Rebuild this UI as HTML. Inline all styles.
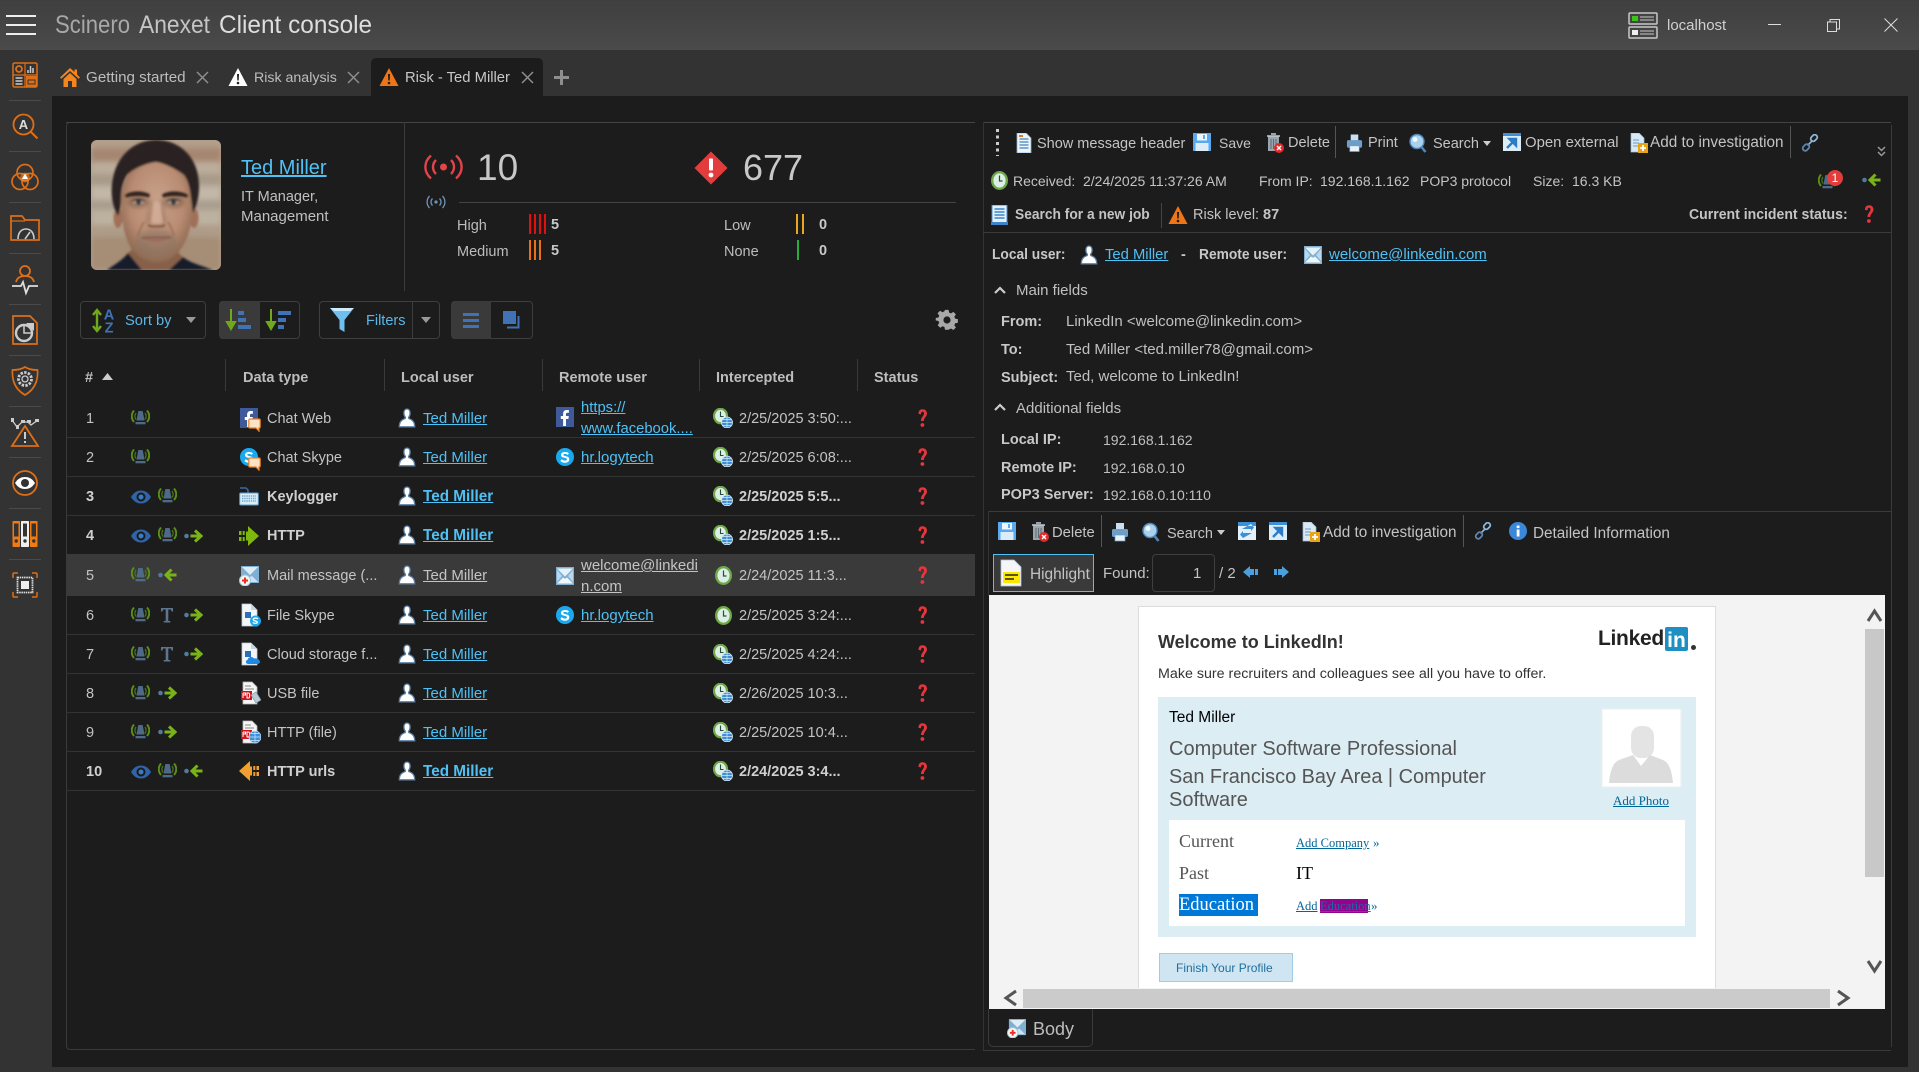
<!DOCTYPE html>
<html><head><meta charset="utf-8"><title>Scinero Anexet Client console</title>
<style>
html,body{margin:0;padding:0;background:#333;}
#app{position:relative;width:1919px;height:1072px;overflow:hidden;background:#333;font-family:"Liberation Sans",sans-serif;color:#c4c4c4;font-size:15px;}
.b{position:absolute;}
.t{position:absolute;white-space:nowrap;line-height:20px;height:20px;}
.i{position:absolute;overflow:visible;}
a{color:#4fc1f5;text-decoration:underline;}
.r{position:absolute;left:0;width:0;height:0;margin-top:1px;}
.r .t{top:-10px;font-size:14.5px;}
.r a.t{font-size:15px;}
.r .i{top:-11px;}
.w{font-weight:bold;color:#d0d0d0;}
.r.w a.t{font-weight:bold;font-size:15.3px;}
.h{top:368px;font-weight:bold;font-size:14.5px;color:#bdbdbd;}
.sep{position:absolute;background:#3a3a3a;}
.s{position:absolute;left:66px;width:909px;height:1px;background:#333;}
.f{font-size:15px;color:#c0c0c0;}
.k{font-weight:bold;font-size:14.5px;color:#c8c8c8;}
.se{font-family:"Liberation Serif",serif;}
</style></head><body>
<svg width="0" height="0" style="position:absolute">
<defs>
<symbol id="alarm" viewBox="0 0 19 19"><path d="M3 2.500C0 6 0 10.500 3 14M16 2.500c3 3.500 3 8 0 11.500" fill="none" stroke="#5a8f18" stroke-width="2"/><path d="M5 5c-1.400 2-1.400 4.500 0 6.500M14 5c1.400 2 1.400 4.500 0 6.500" fill="none" stroke="#4a7416" stroke-width="1.300"/><path d="M7.300 3h4.400l1.800 9.500h-8z" fill="#4f6a86"/><rect x="4.500" y="14" width="10" height="2.300" fill="#4f6a86"/></symbol>
<symbol id="eye" viewBox="0 0 20 14"><path d="M0 7C3 2 6.500 .5 10 .5S17 2 20 7c-3 5-6.500 6.500-10 6.500S3 12 0 7z" fill="#2f64a8"/><circle cx="10" cy="7" r="4.500" fill="#1b1b1b"/><circle cx="10" cy="7" r="2.500" fill="#3c7ac4"/></symbol>
<symbol id="ar" viewBox="0 0 19 14"><circle cx="2.500" cy="7" r="2.300" fill="#527aa0"/><path d="M6.500 7h10M11 1.500 17 7l-6 5.500" fill="none" stroke="#7ab317" stroke-width="3"/></symbol>
<symbol id="al" viewBox="0 0 19 14"><circle cx="2.500" cy="7" r="2.300" fill="#527aa0"/><path d="M18.500 7h-10M13.500 1.500 8 7l5.500 5.500" fill="none" stroke="#7ab317" stroke-width="3"/></symbol>
<symbol id="tt" viewBox="0 0 14 16"><path d="M1 1h12v3.500h-1.500L11 2.500H8.300v11.500h2V15.500H3.700V14h2V2.500H3L2.500 4.500H1z" fill="#5d7690"/></symbol>
<symbol id="user" viewBox="0 0 18 20"><path d="M9 1C7 1 5.900 2.800 5.900 5c0 2 .7 3.400 1.400 4.300.3.400.2 1-.3 1.300C4.800 11.600 1.300 12.600 1.300 18.800h15.400c0-6.200-3.500-7.200-5.700-8.200-.5-.3-.6-.9-.3-1.300.7-.9 1.400-2.300 1.400-4.300C12.100 2.800 11 1 9 1z" fill="#fff" stroke="#5c7fa3" stroke-width="1.300"/></symbol>
<symbol id="fb" viewBox="0 0 18 20"><rect y="0" width="18" height="20" fill="#3f5a9a"/><path d="M10 19v-7h2.400l.4-3H10V7.200c0-.9.300-1.400 1.400-1.400h1.500V3.100c-.3 0-1.200-.1-2.200-.1C8.500 3 7.100 4.300 7.100 6.800V9H4.800v3h2.300v7z" fill="#fff"/></symbol>
<symbol id="bub" viewBox="0 0 13 14"><path d="M2 1h9c.8 0 1.200.5 1.200 1.200v6.500c0 .8-.4 1.200-1.200 1.200v3.300L8 10H2C1.200 10 .8 9.500.8 8.700V2.200C.8 1.500 1.200 1 2 1z" fill="#fbe3c4" stroke="#e8822a" stroke-width="1.200"/></symbol>
<symbol id="sk" viewBox="0 0 18 20"><circle cx="9" cy="10" r="9" fill="#1aa9ee"/><path d="M13 6.500C12 5.300 10.500 5 9 5 6.800 5 5 6 5 8c0 3.500 6 2.200 6 4.300 0 .9-1 1.300-2 1.300-1.400 0-2.400-.6-3.200-1.500L4.400 14c1 1.200 2.700 1.700 4.400 1.700 2.800 0 4.500-1.300 4.500-3.500 0-3.700-6-2.500-6-4.300 0-.7.8-1 1.800-1 1.100 0 1.800.4 2.500 1z" fill="#fff"/></symbol>
<symbol id="kb" viewBox="0 0 20 20"><path d="M1 2h6c1 0 1 2 2 2v3" fill="none" stroke="#3f78b5" stroke-width="1.300"/><rect x=".7" y="7" width="18.600" height="12" rx="1" fill="#d9eef8" stroke="#5f9dc9"/><path d="M3 10h14M3 12.500h14M3 15h14" stroke="#76a8cc" stroke-width="1.400" stroke-dasharray="1.400 .8"/></symbol>
<symbol id="ht" viewBox="0 0 20 20"><path d="M9 0l11 10-11 10v-5.500H7V5.500h2z" fill="#7db80e"/><path d="M0 5h2.500v4H0zM0 11h2.500v4H0zM3.700 5h2v4h-2zM3.700 11h2v4h-2z" fill="#7db80e"/></symbol>
<symbol id="htl" viewBox="0 0 20 20"><path d="M11 0 0 10l11 10v-5.500h2V5.500h-2z" fill="#f0a030"/><path d="M20 5h-2.500v4H20zM20 11h-2.500v4H20zM16.300 5h-2v4h2zM16.300 11h-2v4h2z" fill="#f0a030"/></symbol>
<symbol id="mailx" viewBox="0 0 20 20"><rect x="2" y="0" width="18" height="17" fill="#7fb0d3"/><path d="M3 1h16l-8 8z" fill="#dcedf8"/><path d="M3 16l6-6 2 1 2-1 6 6z" fill="#cfe5f4"/><circle cx="6" cy="14.500" r="5.500" fill="#f5f5f5" stroke="#a9c6dc"/><path d="M3 14.500h6M6 11.500v6" stroke="#e8301c" stroke-width="2"/></symbol>
<symbol id="mail" viewBox="0 0 18 18"><rect width="18" height="18" fill="#7fb0d3"/><path d="M1 1.500h16L9 9.500z" fill="#e5f2fa"/><path d="M1 16.500l6-6 2 1.200 2-1.200 6 6z" fill="#f0f8fc"/><path d="M1 3l5 6-5 6zM17 3l-5 6 5 6z" fill="#b9d8ed"/></symbol>
<symbol id="doc" viewBox="0 0 20 24"><path d="M1 1h9l6 6v16H1z" fill="#f3f6f8" stroke="#c2ccd4" stroke-width=".8"/><path d="M10 1v6h6" fill="#c8d6e0"/><rect x="4" y="9" width="6" height="6" fill="#2f6fb7"/></symbol>
<symbol id="fsk" viewBox="0 0 20 24"><use href="#doc" width="20" height="24"/><circle cx="14.500" cy="18" r="5.500" fill="#1aa9ee"/><path d="M17 15.800c-2-1.400-5-.6-4.700 1.100.2 1.300 4 .8 4 2.400 0 1.300-3 1.400-4.600.2" fill="none" stroke="#fff" stroke-width="1.300"/></symbol>
<symbol id="fcl" viewBox="0 0 20 24"><use href="#doc" width="20" height="24"/><path d="M7 22c-2.500 0-3-3.500-.5-4 .5-3.500 5-4 6.500-1.500 3-.8 6 1.200 6 3.300 0 1.300-1 2.200-2.500 2.200z" fill="#1e88e5"/></symbol>
<symbol id="pdf" viewBox="0 0 20 24"><path d="M2 1h9l5 5v17H2z" fill="#f5f5f5" stroke="#bbb" stroke-width=".8"/><path d="M4 5h6M4 8h9" stroke="#888"/><rect x="0" y="10" width="11" height="9" fill="#d0121b"/><path d="M2 12v5M2 12h2.500v2H2M6 12v5h1.500c1 0 1.200-1 1.200-2.500S8.500 12 7.500 12z" fill="none" stroke="#fff"/></symbol>
<symbol id="fusb" viewBox="0 0 20 24"><use href="#pdf" width="20" height="24"/><path d="M10 14l5-3 5 8-5 3z" fill="#b9c9d6" stroke="#7f93a3" stroke-width=".7"/></symbol>
<symbol id="fweb" viewBox="0 0 20 24"><use href="#pdf" width="20" height="24"/><circle cx="14" cy="17" r="6" fill="#3e90d9" stroke="#cfe6f6" stroke-width=".7"/><path d="M8 17h12M14 11v12M10 13.500h8M10 20.500h8" stroke="#cfe6f6" stroke-width=".7"/></symbol>
<symbol id="clk" viewBox="0 0 17 19"><ellipse cx="8.500" cy="9.500" rx="7.300" ry="8.300" fill="#dcefe6" stroke="#6fa848" stroke-width="2.400"/><path d="M8.500 4.500v5.500h3" fill="none" stroke="#2c4a3a" stroke-width="1.200"/></symbol>
<symbol id="clg" viewBox="0 0 20 20"><ellipse cx="7.500" cy="8" rx="6.500" ry="7.200" fill="#dcefe6" stroke="#6fa848" stroke-width="2.200"/><path d="M7.500 3.500v5h3" fill="none" stroke="#2c4a3a" stroke-width="1.100"/><circle cx="14" cy="14.500" r="5.500" fill="#3f8dd2" stroke="#d6ebf8" stroke-width=".8"/><path d="M8.500 14.500h11M14 9v11M10 11.500h8M10 17.500h8" stroke="#d6ebf8" stroke-width=".7"/></symbol>
<symbol id="q" viewBox="0 0 11 20"><path d="M1.500 6C1.500 2.500 3 1.200 5.500 1.200S10 2.800 10 5.500c0 3-3.200 4.200-3.200 7.500H4c0-4 3-5 3-7.500C7 4.300 6.500 3.700 5.500 3.700S4 4.600 4 6.300z" fill="#e4363c"/><circle cx="5.400" cy="17" r="1.900" fill="#e4363c"/></symbol>
<symbol id="warn" viewBox="0 0 20 20"><path d="M10 1 19.500 19H.5z" fill="#f07516"/><path d="M9 7h2l-.3 6.500H9.300z" fill="#1c1c1c"/><circle cx="10" cy="16" r="1.300" fill="#1c1c1c"/></symbol>
<symbol id="sv" viewBox="0 0 18 18"><path d="M0 0h18v18H0z" fill="#5aa8ee"/><rect x="4" y="1" width="10" height="6.500" fill="#eef6fc"/><rect x="10" y="2" width="2" height="4" fill="#5aa8ee"/><rect x="2.500" y="10" width="13" height="8" fill="#dcecf8"/></symbol>
<symbol id="del" viewBox="0 0 18 20"><path d="M2 3h11v15H2z" fill="#9aa6ad"/><path d="M1 3h13M5 1h5" stroke="#c3ccd2" stroke-width="1.600"/><path d="M5 6v10M7.500 6v10M10 6v10" stroke="#5f6a70"/><circle cx="13" cy="15" r="5" fill="#e32a2a"/><path d="M11 13l4 4M15 13l-4 4" stroke="#fff" stroke-width="1.400"/></symbol>
<symbol id="prn" viewBox="0 0 18 20"><rect x="5" y="1" width="8" height="7" fill="#c9dff0"/><rect x="1" y="7" width="16" height="8" rx="1.500" fill="#6e9ec8"/><rect x="4" y="13" width="10" height="6" fill="#e8f2fa" stroke="#6e9ec8" stroke-width=".7"/></symbol>
<symbol id="srch" viewBox="0 0 18 20"><circle cx="8" cy="8.500" r="7" fill="#a9d0ec" stroke="#4e86b8" stroke-width="1.400"/><circle cx="6" cy="6.500" r="2.500" fill="#eef8fe"/><path d="M12.500 14l4 5" stroke="#4e86b8" stroke-width="2.600"/></symbol>
<symbol id="ext" viewBox="0 0 18 18"><rect width="18" height="18" fill="#dcedf8"/><rect width="18" height="3" fill="#3f8fd4"/><path d="M4 15l8-8M6.500 6H13v6.500z" stroke="#2c7cc6" stroke-width="2.400" fill="#2c7cc6"/></symbol>
<symbol id="add" viewBox="0 0 18 20"><path d="M1 0h8l5 5v14H1z" fill="#d8e8f4" stroke="#9fbdd5" stroke-width=".7"/><path d="M3 7h6M3 10h6M3 13h6" stroke="#6a9bc4"/><rect x="8" y="10" width="10" height="10" fill="#e8a317"/><path d="M13 12v6M10 15h6" stroke="#fff" stroke-width="1.800"/></symbol>
<symbol id="lnk" viewBox="0 0 18 18"><path d="M6.500 11.500l5-5" stroke="#8cb6d8" stroke-width="1.600"/><rect x="9.500" y="1.500" width="7" height="5" rx="2.300" transform="rotate(-45 13 4)" fill="none" stroke="#8cb6d8" stroke-width="1.800"/><rect x="1.500" y="11" width="7" height="5" rx="2.300" transform="rotate(-45 5 13.500)" fill="none" stroke="#5e86ad" stroke-width="1.800"/></symbol>
<symbol id="job" viewBox="0 0 17 20"><rect x="1" y="0" width="15" height="19" fill="#e4f1fb" stroke="#4c8fcd"/><path d="M3.500 4h10M3.500 7h10M3.500 10h10M3.500 13h10" stroke="#3d85c8" stroke-width="1.400"/><rect y="17" width="17" height="3" fill="#3d85c8"/></symbol>
<symbol id="hdr" viewBox="0 0 16 20"><path d="M1 0h9l5 5v15H1z" fill="#eef5fa" stroke="#8cb0cd" stroke-width=".8"/><path d="M3.500 6h9M3.500 9h9M3.500 12h9M3.500 15h9" stroke="#3f83c0" stroke-width="1.300"/><rect x="3" y="2" width="4" height="2" fill="#e07a1a"/></symbol>
<symbol id="cu" viewBox="0 0 12 12"><path d="M1 8l5-5 5 5" fill="none" stroke="#ccc" stroke-width="2.200"/></symbol>
<symbol id="x" viewBox="0 0 13 13"><path d="M1 1l11 11M12 1 1 12" stroke="#8e8e8e" stroke-width="1.500"/></symbol>
</defs>
</svg>
<div id="app">
<!-- title bar -->
<div class="b" style="left:0;top:0;width:1919px;height:50px;background:linear-gradient(#3f3f3f,#4a4a4a)"></div>
<div class="b" style="left:6px;top:15px;width:30px;height:2px;background:#eee"></div>
<div class="b" style="left:6px;top:24px;width:30px;height:2px;background:#eee"></div>
<div class="b" style="left:6px;top:33px;width:30px;height:2px;background:#eee"></div>
<div class="t" style="left:55px;top:10px;height:30px;line-height:30px;font-size:25px;color:#a8a8a8;transform:scaleX(.885);transform-origin:left">Scinero</div>
<div class="t" style="left:139px;top:10px;height:30px;line-height:30px;font-size:25px;color:#c4c4c4;transform:scaleX(.912);transform-origin:left">Anexet</div>
<div class="t" style="left:219px;top:10px;height:30px;line-height:30px;font-size:25px;color:#dedede;transform:scaleX(.975);transform-origin:left">Client console</div>
<svg class="i" style="left:1628px;top:12px;width:30px;height:27px" viewBox="0 0 30 27"><rect x="1" y="1" width="28" height="11" rx="1" fill="#444" stroke="#c8c8c8" stroke-width="1.500"/><rect x="1" y="15" width="28" height="11" rx="1" fill="#444" stroke="#c8c8c8" stroke-width="1.500"/><rect x="4" y="4" width="6" height="5" fill="#3fc21c"/><rect x="4" y="18" width="6" height="5" fill="#eee"/><path d="M12 5h14M12 8h14M12 19h14M12 22h14" stroke="#c8c8c8"/></svg>
<div class="t" style="left:1667px;top:16px;color:#d0d0d0">localhost</div>
<div class="b" style="left:1768px;top:24px;width:13px;height:1px;background:#ddd"></div>
<svg class="i" style="left:1827px;top:19px;width:13px;height:13px" viewBox="0 0 13 13"><rect x=".5" y="3" width="9" height="9.500" fill="none" stroke="#ddd"/><path d="M3 3V.5h9.500V10H9.500" fill="none" stroke="#ddd"/></svg>
<svg class="i" style="left:1884px;top:18px;width:14px;height:14px" viewBox="0 0 14 14"><path d="M.5.5l13 13M13.500.5l-13 13" stroke="#ddd"/></svg>

<!-- content area -->
<div class="b" style="left:52px;top:96px;width:1856px;height:971px;background:#1c1c1c"></div>

<!-- sidebar -->
<div class="sep" style="left:9px;top:100px;width:32px;height:1px;background:#4a4a4a"></div>
<div class="sep" style="left:9px;top:151px;width:32px;height:1px;background:#4a4a4a"></div>
<div class="sep" style="left:9px;top:202px;width:32px;height:1px;background:#4a4a4a"></div>
<div class="sep" style="left:9px;top:253px;width:32px;height:1px;background:#4a4a4a"></div>
<div class="sep" style="left:9px;top:304px;width:32px;height:1px;background:#4a4a4a"></div>
<div class="sep" style="left:9px;top:355px;width:32px;height:1px;background:#4a4a4a"></div>
<div class="sep" style="left:9px;top:406px;width:32px;height:1px;background:#4a4a4a"></div>
<div class="sep" style="left:9px;top:457px;width:32px;height:1px;background:#4a4a4a"></div>
<div class="sep" style="left:9px;top:508px;width:32px;height:1px;background:#4a4a4a"></div>
<div class="sep" style="left:9px;top:559px;width:32px;height:1px;background:#4a4a4a"></div>
<svg class="i" style="left:12px;top:62px;width:26px;height:26px" viewBox="0 0 26 26"><rect x="1" y="1" width="24" height="24" rx="1.500" fill="none" stroke="#dd6f17" stroke-width="1.500"/><path d="M1 13h24M13 1v24" stroke="#dd6f17" stroke-width="1.200"/><circle cx="7" cy="7" r="3" fill="none" stroke="#dd6f17" stroke-width="1.800"/><path d="M16 11V8M18.500 11V4M21 11V6" stroke="#ccc" stroke-width="1.500"/><path d="M3.500 16h7M3.500 19h7M3.500 22h7" stroke="#ccc" stroke-width="1.500"/><rect x="14" y="14" width="11" height="11" fill="#dd6f17"/><rect x="16" y="18" width="7" height="4" fill="none" stroke="#333"/></svg>
<svg class="i" style="left:12px;top:113px;width:27px;height:27px" viewBox="0 0 27 27"><circle cx="11.500" cy="11.500" r="10" fill="none" stroke="#dd6f17" stroke-width="1.800"/><path d="M18.500 18.500l7 7" stroke="#dd6f17" stroke-width="2"/><text x="11.500" y="16" font-size="13" font-weight="bold" text-anchor="middle" fill="#ddd" font-family="Liberation Sans">A</text></svg>
<svg class="i" style="left:11px;top:163px;width:28px;height:28px" viewBox="0 0 28 28"><g fill="none" stroke="#dd6f17" stroke-width="1.700"><circle cx="14" cy="9.500" r="8"/><circle cx="9" cy="18.500" r="8"/><circle cx="19" cy="18.500" r="8"/></g><circle cx="14" cy="14.500" r="5" fill="#f58a2a" opacity=".6"/><path d="M14 10.500l3 5.500h-6z" fill="#fff"/></svg>
<svg class="i" style="left:10px;top:215px;width:30px;height:26px" viewBox="0 0 30 26"><path d="M1 25V1h11l3 4h14v20z" fill="none" stroke="#dd6f17" stroke-width="1.700"/><path d="M1 6h14" stroke="#dd6f17" stroke-width="1.200"/><path d="M8 24c0-6 3-10 8-10s8 4 8 10" fill="none" stroke="#ccc" stroke-width="1.600"/><path d="M15 24l5-7" stroke="#ccc" stroke-width="1.600"/></svg>
<svg class="i" style="left:11px;top:265px;width:28px;height:29px" viewBox="0 0 28 29"><circle cx="14" cy="6" r="5" fill="none" stroke="#dd6f17" stroke-width="1.800"/><path d="M5 17c1-4 4-6 9-6s8 2 9 6" fill="none" stroke="#dd6f17" stroke-width="1.800"/><path d="M1 21h9l2-4 3 11 3-7h9" fill="none" stroke="#ddd" stroke-width="1.800"/></svg>
<svg class="i" style="left:12px;top:315px;width:26px;height:30px" viewBox="0 0 26 30"><path d="M1 1h17l7 7v21H1z" fill="none" stroke="#dd6f17" stroke-width="1.700"/><circle cx="12" cy="18" r="8" fill="none" stroke="#ccc" stroke-width="2.400"/><path d="M14 8h8v8z" fill="#ccc"/><path d="M12 10v8h8" fill="none" stroke="#ccc" stroke-width="1.500"/></svg>
<svg class="i" style="left:11px;top:366px;width:28px;height:30px" viewBox="0 0 28 30"><path d="M14 1c3 2 8 3 12.500 3 .7 10-2 19-12.500 25C3.500 23 .8 14 1.500 4 6 4 11 3 14 1z" fill="none" stroke="#dd6f17" stroke-width="1.700"/><circle cx="14" cy="13" r="6.500" fill="none" stroke="#ccc" stroke-width="2.800" stroke-dasharray="2.400 1.300"/><circle cx="14" cy="13" r="3" fill="none" stroke="#ccc" stroke-width="1.300"/></svg>
<svg class="i" style="left:10px;top:417px;width:30px;height:30px" viewBox="0 0 30 30"><path d="M2 3l5 7 5-5h6l3 3 7-5" fill="none" stroke="#ccc" stroke-width="1.300"/><path d="M1 1h3v4H1zM6 8h3v4H6zM11 3h4v3h-4zM17 3h4v3h-4zM25 2h4v3h-4z" fill="#ccc"/><path d="M15 9 28 29H2z" fill="#333" stroke="#dd6f17" stroke-width="1.800"/><path d="M15 15v7M15 24v2" stroke="#ddd" stroke-width="1.800"/></svg>
<svg class="i" style="left:12px;top:470px;width:26px;height:26px" viewBox="0 0 26 26"><circle cx="13" cy="13" r="12" fill="none" stroke="#dd6f17" stroke-width="1.800"/><path d="M3 13c3-4.500 6-6 10-6s7 1.500 10 6c-3 4.500-6 6-10 6s-7-1.500-10-6z" fill="#fff"/><circle cx="13" cy="13" r="4" fill="#333"/></svg>
<svg class="i" style="left:12px;top:521px;width:26px;height:26px" viewBox="0 0 26 26"><rect x=".5" y="0" width="7.500" height="26" rx=".7" fill="#f07a14"/><rect x="9" y="0" width="8" height="26" rx=".7" fill="#eee"/><rect x="18" y="0" width="7.500" height="26" rx=".7" fill="#f07a14"/><rect x="2" y="2.500" width="4.500" height="13" fill="#333"/><rect x="11" y="2.500" width="4" height="13" fill="#333"/><rect x="19.500" y="2.500" width="4.500" height="13" fill="#333"/><circle cx="4.200" cy="20" r="1.700" fill="#333"/><circle cx="13" cy="20" r="1.700" fill="#333"/><circle cx="21.800" cy="20" r="1.700" fill="#333"/></svg>
<svg class="i" style="left:12px;top:572px;width:26px;height:26px" viewBox="0 0 26 26"><path d="M1 6V2c0-.6.4-1 1-1h4M20 1h4c.6 0 1 .4 1 1v4M25 20v4c0 .6-.4 1-1 1h-4M6 25H2c-.6 0-1-.4-1-1v-4" fill="none" stroke="#dd6f17" stroke-width="1.500"/><rect x="5.500" y="5.500" width="15" height="15" fill="#333" stroke="#ddd" stroke-width="1.800" stroke-dasharray="1.500 .7"/><rect x="9" y="9" width="8" height="8" fill="#eee"/></svg>

<!-- tabs -->
<div class="b" style="left:371px;top:58px;width:172px;height:38px;background:#1c1c1c;border-radius:5px 5px 0 0"></div>
<svg class="i" style="left:60px;top:68px;width:20px;height:19px" viewBox="0 0 20 19"><path d="M10 0 0 9.500l1.300 1.300L10 3l8.700 7.800 1.300-1.300-3-3V1.500h-2.500V4z" fill="#f5861f"/><path d="M3.500 11 10 5l6.500 6v8H12v-6H8v6H3.500z" fill="#f5861f"/></svg>
<div class="t" style="left:86px;top:68px;font-size:15.2px;color:#bdbdbd">Getting started</div>
<svg class="i" style="left:196px;top:71px;width:13px;height:13px"><use href="#x"/></svg>
<svg class="i" style="left:228px;top:67px;width:20px;height:20px" viewBox="0 0 20 20"><path d="M10 1 19.500 19H.5z" fill="#fff"/><path d="M9 7h2l-.3 6.500H9.300z" fill="#222"/><circle cx="10" cy="16" r="1.300" fill="#222"/></svg>
<div class="t" style="left:254px;top:68px;font-size:14.2px;color:#bdbdbd">Risk analysis</div>
<svg class="i" style="left:347px;top:71px;width:13px;height:13px"><use href="#x"/></svg>
<svg class="i" style="left:379px;top:67px;width:20px;height:20px"><use href="#warn"/></svg>
<div class="t" style="left:405px;top:68px;font-size:14.8px;color:#c8c8c8">Risk - Ted Miller</div>
<svg class="i" style="left:521px;top:71px;width:13px;height:13px"><use href="#x"/></svg>
<div class="b" style="left:554px;top:76px;width:15px;height:3px;background:#8e8e8e"></div>
<div class="b" style="left:560px;top:70px;width:3px;height:15px;background:#8e8e8e"></div>

<!-- left panel -->
<div class="b" style="left:66px;top:122px;width:909px;height:928px;border:1px solid #3a3a3a;border-right:0;border-radius:4px 0 0 4px;box-sizing:border-box"></div>
<div class="b" style="left:66px;top:122px;width:909px;height:1px;background:#444"></div>
<div class="b" style="left:404px;top:122px;width:1px;height:169px;background:#3c3c3c"></div>
<!-- portrait -->
<svg class="i" style="left:91px;top:140px;width:130px;height:130px" viewBox="0 0 130 130">
<defs><clipPath id="pc"><rect width="130" height="130" rx="6"/></clipPath><filter id="b1" x="-10%" y="-10%" width="120%" height="120%"><feGaussianBlur stdDeviation="1"/></filter><filter id="b2"><feGaussianBlur stdDeviation="3"/></filter><filter id="b3" x="-40%" y="-40%" width="180%" height="180%"><feGaussianBlur stdDeviation="2.500"/></filter>
<radialGradient id="skn" cx=".5" cy=".42" r=".62"><stop offset="0" stop-color="#c9a28c"/><stop offset=".6" stop-color="#b88c72"/><stop offset="1" stop-color="#84604a"/></radialGradient></defs>
<g clip-path="url(#pc)">
<rect width="130" height="130" fill="#ae9f8c"/>
<g filter="url(#b2)"><rect y="0" width="130" height="8" fill="#b29f8b"/><rect y="8" width="130" height="14" fill="#a6866f"/><rect y="22" width="130" height="12" fill="#bcae9c"/><rect y="34" width="130" height="12" fill="#a89a88"/><rect y="46" width="130" height="14" fill="#c2b8a8"/><rect y="60" width="130" height="10" fill="#a99d8d"/><rect y="70" width="130" height="15" fill="#bdb1a0"/><rect y="85" width="130" height="12" fill="#ae9c88"/><rect y="97" width="130" height="33" fill="#a68d74"/></g>
<g filter="url(#b1)">
<path d="M37 113c5-4 7-6 8-14l38 0c1 8 3 14 9 18l-10 13H46z" fill="#86604a"/>
<path d="M38 118l12 12H34zM92 118l-10 12h12z" fill="#93b2cf"/>
<path d="M16 130c8-6 16-10 21-17l14 17zM122 130c-10-4-23-7-30-13l-14 13z" fill="#161b2a"/>
<ellipse cx="27" cy="78" rx="4.500" ry="10" fill="#a07058"/><ellipse cx="103" cy="78" rx="4.500" ry="10" fill="#a07058"/>
<path d="M30 60C30 36 46 18 65 18s37 18 37 42c0 22-4 38-13 50-6 9-16 13-24 13s-18-5-24-13C34 98 30 82 30 60z" fill="url(#skn)"/>
<path d="M27 76C21 66 19 52 22 38 26 16 43 0 65 0c26 0 44 20 43 48 0 8-2 17-6 25-1-5-1-10-2-15-1-8-2-16-7-23-8-6-20-12-28-13-9 1-22 6-29 13-4 6-6 15-6 23 0 7-1 13-3 18z" fill="#2a2320"/>
<path d="M36 24c10-8 22-11 29-11s21 3 30 12c-10-4-20-6-30-6-10 0-20 2-29 5z" fill="#2a2320"/>
</g>
<g filter="url(#b3)"><ellipse cx="47" cy="62" rx="11" ry="6" fill="#7d5a45" opacity=".6"/><ellipse cx="83" cy="62" rx="11" ry="6" fill="#7d5a45" opacity=".6"/><ellipse cx="65" cy="103" rx="21" ry="14" fill="#84705f" opacity=".5"/><path d="M58 60l-3 24h4l2-24zM72 60l3 24h-4l-2-24z" fill="#8c6650" opacity=".55"/></g>
<g filter="url(#b1)">
<path d="M34 55c6-4.500 18-4.500 25-.5l-1 3c-6-2-16-2-23 0zM71 54.500c7-4 19-4 26 .5l-1 2.500c-7-2-17-2-24 0z" fill="#2e221c"/>
<path d="M41 62.500c4-2.500 9-2.500 13 0-4 2-9 2-13 0zM76 62.500c4-2.500 9-2.500 13 0-4 2-9 2-13 0z" fill="#b6a294"/>
<circle cx="47.500" cy="62" r="2.600" fill="#2f3a46"/><circle cx="82.500" cy="62" r="2.600" fill="#2f3a46"/>
<path d="M41 61.500c4-2.500 9-2.500 13 0M76 61.500c4-2.500 9-2.500 13 0" fill="none" stroke="#2a1f1a" stroke-width="1.200"/>
<path d="M63 62c-1 8-2 15-3 20 2 2 10 2 12 0-1-5-2-12-3-20z" fill="#d5b09c" opacity=".75"/>
<path d="M57 85c3 2.500 5 1 8 1.500 3-.5 6 1 9-1.500" fill="none" stroke="#7c5540" stroke-width="2"/>
<path d="M53 82c-3 5-5 9-6 14M77 82c3 5 5 9 6 14" fill="none" stroke="#91694f" stroke-width="1.300"/>
<path d="M52 98c8 1.500 19 1.500 27-.5-7 5-20 5.500-27 .5z" fill="#a0655a"/><path d="M51 98c8-.8 19-.8 29-.5" stroke="#6e4034" fill="none" stroke-width="1"/>
</g>
</g></svg>
<a class="t" style="left:241px;top:156px;height:24px;line-height:24px;font-size:20px">Ted Miller</a>
<div class="t" style="left:241px;top:187px;font-size:14.5px;color:#c0c0c0">IT Manager,</div>
<div class="t" style="left:241px;top:207px;font-size:15px;color:#c0c0c0">Management</div>

<svg class="i" style="left:424px;top:154px;width:39px;height:26px" viewBox="0 0 39 26"><g fill="none" stroke="#e2444a" stroke-width="2.400"><path d="M7 1.500C-.5 8-.5 18 7 24.500M32 1.500c7.500 6.500 7.500 16.500 0 23"/><path d="M12 6c-4 4-4 10 0 14M27 6c4 4 4 10 0 14"/></g><circle cx="19.500" cy="13" r="3.500" fill="#e2444a"/></svg>
<div class="t" style="left:477px;top:146px;height:44px;line-height:44px;font-size:37px;color:#c8c8c8">10</div>
<svg class="i" style="left:426px;top:195px;width:20px;height:14px" viewBox="0 0 20 14"><g fill="none" stroke="#6e93b5" stroke-width="1.300"><path d="M3.500 1C.3 4.500.3 9.500 3.500 13M16.500 1c3.200 3.500 3.200 8.500 0 12"/><path d="M6.500 3.500c-2 2-2 5 0 7M13.500 3.500c2 2 2 5 0 7"/></g><circle cx="10" cy="7" r="1.600" fill="#6e93b5"/></svg>
<div class="b" style="left:459px;top:202px;width:497px;height:1px;background:#444"></div>
<svg class="i" style="left:694px;top:151px;width:34px;height:34px" viewBox="0 0 34 34"><path d="M17 .5 33.500 17 17 33.500.5 17z" fill="#e33c3c"/><rect x="15" y="7.500" width="4" height="12" rx="1" fill="#fff"/><circle cx="17" cy="24" r="2.400" fill="#fff"/></svg>
<div class="t" style="left:743px;top:146px;height:44px;line-height:44px;font-size:36px;color:#c8c8c8">677</div>
<div class="t" style="left:457px;top:216px;font-size:14.5px;color:#bdbdbd">High</div>
<div class="t" style="left:457px;top:242px;font-size:14.5px;color:#bdbdbd">Medium</div>
<svg class="i" style="left:529px;top:214px;width:18px;height:20px"><path d="M1 0v20M6 0v20M11 0v20M16 0v20" stroke="#e01010" stroke-width="2"/></svg>
<svg class="i" style="left:529px;top:240px;width:14px;height:20px"><path d="M1 0v20M6 0v20M11 0v20" stroke="#e8701a" stroke-width="2"/></svg>
<div class="t" style="left:551px;top:215px;font-size:14.5px;font-weight:bold;color:#c8c8c8">5</div>
<div class="t" style="left:551px;top:241px;font-size:14.5px;font-weight:bold;color:#c8c8c8">5</div>
<div class="t" style="left:724px;top:216px;font-size:14.5px;color:#bdbdbd">Low</div>
<div class="t" style="left:724px;top:242px;font-size:14.5px;color:#bdbdbd">None</div>
<svg class="i" style="left:796px;top:214px;width:10px;height:20px"><path d="M1 0v20M7 0v20" stroke="#e8a81a" stroke-width="2"/></svg>
<svg class="i" style="left:797px;top:240px;width:4px;height:20px"><path d="M1 0v20" stroke="#27ae3a" stroke-width="2"/></svg>
<div class="t" style="left:819px;top:215px;font-size:14.5px;font-weight:bold;color:#c8c8c8">0</div>
<div class="t" style="left:819px;top:241px;font-size:14.5px;font-weight:bold;color:#c8c8c8">0</div>

<!-- toolbar -->
<div class="b" style="left:80px;top:301px;width:126px;height:38px;border:1px solid #3e3e3e;border-radius:4px;box-sizing:border-box"></div>
<svg class="i" style="left:92px;top:308px;width:25px;height:25px" viewBox="0 0 25 25"><path d="M5 3v19M1 7l4-5 4 5M1 18l4 5 4-5" fill="none" stroke="#6fa81a" stroke-width="2.400"/><text x="17" y="11.500" font-size="14.500" font-weight="bold" text-anchor="middle" fill="#3f73b5" font-family="Liberation Sans">A</text><text x="17" y="24.500" font-size="14.500" font-weight="bold" text-anchor="middle" fill="#3f73b5" font-family="Liberation Sans">Z</text></svg>
<div class="t" style="left:125px;top:311px;font-size:14.7px;color:#5bb7ea">Sort by</div>
<svg class="i" style="left:186px;top:317px;width:10px;height:6px"><path d="M0 0h10L5 6z" fill="#999"/></svg>
<div class="b" style="left:219px;top:301px;width:81px;height:38px;border:1px solid #3e3e3e;border-radius:4px;box-sizing:border-box"></div>
<div class="b" style="left:219px;top:301px;width:41px;height:38px;background:#3a3a3a;border-radius:4px 0 0 4px"></div>
<svg class="i" style="left:227px;top:309px;width:26px;height:22px" viewBox="0 0 26 22"><path d="M4 0v17M0 13l4 7 4-7z" fill="#6fa81a" stroke="#6fa81a" stroke-width="2"/><path d="M11 2h6v4h-6zM11 9h8v4h-8zM11 16h13v4H11z" fill="#3f73b5"/></svg>
<svg class="i" style="left:267px;top:309px;width:26px;height:22px" viewBox="0 0 26 22"><path d="M4 0v17M0 13l4 7 4-7z" fill="#6fa81a" stroke="#6fa81a" stroke-width="2"/><path d="M11 2h13v4H11zM11 9h8v4h-8zM11 16h6v4h-6z" fill="#3f73b5"/></svg>
<div class="b" style="left:319px;top:301px;width:121px;height:38px;border:1px solid #3e3e3e;border-radius:4px;box-sizing:border-box"></div>
<div class="b" style="left:412px;top:301px;width:1px;height:38px;background:#3e3e3e"></div>
<svg class="i" style="left:330px;top:307px;width:24px;height:26px" viewBox="0 0 24 26"><path d="M0 1h24L14.500 13v12L9.500 22V13z" fill="#6fc0ee"/><path d="M0 1h24l-4 3H4z" fill="#cdebfa"/></svg>
<div class="t" style="left:366px;top:311px;font-size:14.5px;color:#5bb7ea">Filters</div>
<svg class="i" style="left:421px;top:317px;width:10px;height:6px"><path d="M0 0h10L5 6z" fill="#999"/></svg>
<div class="b" style="left:451px;top:301px;width:82px;height:38px;border:1px solid #3e3e3e;border-radius:4px;box-sizing:border-box"></div>
<div class="b" style="left:451px;top:301px;width:40px;height:38px;background:#3a3a3a;border-radius:4px 0 0 4px"></div>
<svg class="i" style="left:463px;top:313px;width:16px;height:15px"><path d="M0 0h16v3H0zM0 6h16v3H0zM0 12h16v3H0z" fill="#3f73b5"/></svg>
<svg class="i" style="left:503px;top:311px;width:18px;height:18px"><path d="M0 0h13v13H0z" fill="#3f73b5"/><path d="M15.500 5v11.500H4" fill="none" stroke="#3f73b5" stroke-width="2"/></svg>
<svg class="i" style="left:936px;top:309px;width:22px;height:22px" viewBox="0 0 22 22"><path d="M9 0h4l.6 3 2.100.9 2.600-1.700 2.800 2.800-1.700 2.600.9 2.100 3 .6v4l-3 .6-.9 2.100 1.700 2.600-2.800 2.800-2.600-1.700-2.100.9L13 22H9l-.6-3-2.100-.9-2.600 1.700-2.800-2.800 1.700-2.600-.9-2.100-3-.6V9l3-.6.9-2.100L.7 3.700 3.500.9l2.600 1.700 2.100-.9z" transform="scale(.9) translate(1 1)" fill="#a8a8a8"/><circle cx="11" cy="11" r="3.600" fill="#1c1c1c"/></svg>

<!-- table header -->
<div class="t h" style="left:85px">#</div>
<svg class="i" style="left:102px;top:373px;width:11px;height:7px"><path d="M5.500 0 11 7H0z" fill="#ccc"/></svg>
<div class="sep" style="left:225px;top:359px;width:1px;height:32px"></div>
<div class="sep" style="left:384px;top:359px;width:1px;height:32px"></div>
<div class="sep" style="left:542px;top:359px;width:1px;height:32px"></div>
<div class="sep" style="left:699px;top:359px;width:1px;height:32px"></div>
<div class="sep" style="left:857px;top:359px;width:1px;height:32px"></div>
<div class="t h" style="left:243px">Data type</div>
<div class="t h" style="left:401px">Local user</div>
<div class="t h" style="left:559px">Remote user</div>
<div class="t h" style="left:716px">Intercepted</div>
<div class="t h" style="left:874px">Status</div>

<div class="s" style="top:437px"></div><div class="s" style="top:476px"></div><div class="s" style="top:515px"></div>
<div class="b" style="left:66px;top:554px;width:909px;height:42px;background:#3a3a3a"></div>
<div class="s" style="top:634px"></div><div class="s" style="top:673px"></div><div class="s" style="top:712px"></div><div class="s" style="top:751px"></div><div class="s" style="top:790px"></div>

<!-- rows -->
<div class="r" style="top:418px"><div class="t" style="left:86px">1</div>
<svg class="i" style="left:131px;width:19px;height:19px"><use href="#alarm"/></svg>
<svg class="i" style="left:240px;width:18px;height:20px"><use href="#fb"/></svg><svg class="i" style="left:248px;top:-1px;width:13px;height:14px"><use href="#bub"/></svg>
<div class="t" style="left:267px">Chat Web</div>
<svg class="i" style="left:398px;width:18px;height:20px"><use href="#user"/></svg><a class="t" style="left:423px">Ted Miller</a>
<svg class="i" style="left:556px;top:-12px;width:18px;height:20px"><use href="#fb"/></svg>
<a class="t" style="left:581px;top:-21px;font-size:14.8px">https://</a><a class="t" style="left:581px;top:0;font-size:14.8px">www.facebook....</a>
<svg class="i" style="left:713px;width:20px;height:20px"><use href="#clg"/></svg><div class="t" style="left:739px">2/25/2025 3:50:...</div>
<svg class="i" style="left:917px;width:11px;height:20px"><use href="#q"/></svg></div>

<div class="r" style="top:457px"><div class="t" style="left:86px">2</div>
<svg class="i" style="left:131px;width:19px;height:19px"><use href="#alarm"/></svg>
<svg class="i" style="left:240px;width:18px;height:20px"><use href="#sk"/></svg><svg class="i" style="left:248px;top:-1px;width:13px;height:14px"><use href="#bub"/></svg>
<div class="t" style="left:267px">Chat Skype</div>
<svg class="i" style="left:398px;width:18px;height:20px"><use href="#user"/></svg><a class="t" style="left:423px">Ted Miller</a>
<svg class="i" style="left:556px;width:18px;height:20px"><use href="#sk"/></svg><a class="t" style="left:581px">hr.logytech</a>
<svg class="i" style="left:713px;width:20px;height:20px"><use href="#clg"/></svg><div class="t" style="left:739px">2/25/2025 6:08:...</div>
<svg class="i" style="left:917px;width:11px;height:20px"><use href="#q"/></svg></div>

<div class="r w" style="top:496px"><div class="t w" style="left:86px">3</div>
<svg class="i" style="left:131px;top:-7px;width:20px;height:14px"><use href="#eye"/></svg><svg class="i" style="left:158px;width:19px;height:19px"><use href="#alarm"/></svg>
<svg class="i" style="left:239px;width:20px;height:20px"><use href="#kb"/></svg>
<div class="t w" style="left:267px">Keylogger</div>
<svg class="i" style="left:398px;width:18px;height:20px"><use href="#user"/></svg><a class="t" style="left:423px">Ted Miller</a>
<svg class="i" style="left:713px;width:20px;height:20px"><use href="#clg"/></svg><div class="t w" style="left:739px">2/25/2025 5:5...</div>
<svg class="i" style="left:917px;width:11px;height:20px"><use href="#q"/></svg></div>

<div class="r w" style="top:535px"><div class="t w" style="left:86px">4</div>
<svg class="i" style="left:131px;top:-7px;width:20px;height:14px"><use href="#eye"/></svg><svg class="i" style="left:158px;width:19px;height:19px"><use href="#alarm"/></svg><svg class="i" style="left:184px;top:-7px;width:19px;height:14px"><use href="#ar"/></svg>
<svg class="i" style="left:239px;top:-10px;width:20px;height:20px"><use href="#ht"/></svg>
<div class="t w" style="left:267px">HTTP</div>
<svg class="i" style="left:398px;width:18px;height:20px"><use href="#user"/></svg><a class="t" style="left:423px">Ted Miller</a>
<svg class="i" style="left:713px;width:20px;height:20px"><use href="#clg"/></svg><div class="t w" style="left:739px">2/25/2025 1:5...</div>
<svg class="i" style="left:917px;width:11px;height:20px"><use href="#q"/></svg></div>

<div class="r" style="top:575px"><div class="t" style="left:86px">5</div>
<svg class="i" style="left:131px;width:19px;height:19px"><use href="#alarm"/></svg><svg class="i" style="left:158px;top:-8px;width:19px;height:14px"><use href="#al"/></svg>
<svg class="i" style="left:239px;top:-10px;width:20px;height:20px"><use href="#mailx"/></svg>
<div class="t" style="left:267px">Mail message (...</div>
<svg class="i" style="left:398px;width:18px;height:20px"><use href="#user"/></svg><a class="t" style="left:423px;color:#c4c4c4">Ted Miller</a>
<svg class="i" style="left:556px;top:-9px;width:18px;height:18px"><use href="#mail"/></svg>
<a class="t" style="left:581px;top:-20px;color:#c4c4c4">welcome@linkedi</a><a class="t" style="left:581px;top:1px;color:#c4c4c4">n.com</a>
<svg class="i" style="left:715px;top:-10px;width:17px;height:19px"><use href="#clk"/></svg><div class="t" style="left:739px">2/24/2025 11:3...</div>
<svg class="i" style="left:917px;width:11px;height:20px"><use href="#q"/></svg></div>

<div class="r" style="top:615px"><div class="t" style="left:86px">6</div>
<svg class="i" style="left:131px;width:19px;height:19px"><use href="#alarm"/></svg><svg class="i" style="left:160px;top:-9px;width:14px;height:16px"><use href="#tt"/></svg><svg class="i" style="left:184px;top:-8px;width:19px;height:14px"><use href="#ar"/></svg>
<svg class="i" style="left:241px;top:-13px;width:20px;height:24px"><use href="#fsk"/></svg>
<div class="t" style="left:267px">File Skype</div>
<svg class="i" style="left:398px;width:18px;height:20px"><use href="#user"/></svg><a class="t" style="left:423px">Ted Miller</a>
<svg class="i" style="left:556px;width:18px;height:20px"><use href="#sk"/></svg><a class="t" style="left:581px">hr.logytech</a>
<svg class="i" style="left:715px;top:-10px;width:17px;height:19px"><use href="#clk"/></svg><div class="t" style="left:739px">2/25/2025 3:24:...</div>
<svg class="i" style="left:917px;width:11px;height:20px"><use href="#q"/></svg></div>

<div class="r" style="top:654px"><div class="t" style="left:86px">7</div>
<svg class="i" style="left:131px;width:19px;height:19px"><use href="#alarm"/></svg><svg class="i" style="left:160px;top:-9px;width:14px;height:16px"><use href="#tt"/></svg><svg class="i" style="left:184px;top:-8px;width:19px;height:14px"><use href="#ar"/></svg>
<svg class="i" style="left:241px;top:-13px;width:20px;height:24px"><use href="#fcl"/></svg>
<div class="t" style="left:267px">Cloud storage f...</div>
<svg class="i" style="left:398px;width:18px;height:20px"><use href="#user"/></svg><a class="t" style="left:423px">Ted Miller</a>
<svg class="i" style="left:713px;width:20px;height:20px"><use href="#clg"/></svg><div class="t" style="left:739px">2/25/2025 4:24:...</div>
<svg class="i" style="left:917px;width:11px;height:20px"><use href="#q"/></svg></div>

<div class="r" style="top:693px"><div class="t" style="left:86px">8</div>
<svg class="i" style="left:131px;width:19px;height:19px"><use href="#alarm"/></svg><svg class="i" style="left:158px;top:-8px;width:19px;height:14px"><use href="#ar"/></svg>
<svg class="i" style="left:241px;top:-13px;width:20px;height:24px"><use href="#fusb"/></svg>
<div class="t" style="left:267px">USB file</div>
<svg class="i" style="left:398px;width:18px;height:20px"><use href="#user"/></svg><a class="t" style="left:423px">Ted Miller</a>
<svg class="i" style="left:713px;width:20px;height:20px"><use href="#clg"/></svg><div class="t" style="left:739px">2/26/2025 10:3...</div>
<svg class="i" style="left:917px;width:11px;height:20px"><use href="#q"/></svg></div>

<div class="r" style="top:732px"><div class="t" style="left:86px">9</div>
<svg class="i" style="left:131px;width:19px;height:19px"><use href="#alarm"/></svg><svg class="i" style="left:158px;top:-8px;width:19px;height:14px"><use href="#ar"/></svg>
<svg class="i" style="left:241px;top:-13px;width:20px;height:24px"><use href="#fweb"/></svg>
<div class="t" style="left:267px">HTTP (file)</div>
<svg class="i" style="left:398px;width:18px;height:20px"><use href="#user"/></svg><a class="t" style="left:423px">Ted Miller</a>
<svg class="i" style="left:713px;width:20px;height:20px"><use href="#clg"/></svg><div class="t" style="left:739px">2/25/2025 10:4...</div>
<svg class="i" style="left:917px;width:11px;height:20px"><use href="#q"/></svg></div>

<div class="r w" style="top:771px"><div class="t w" style="left:86px">10</div>
<svg class="i" style="left:131px;top:-7px;width:20px;height:14px"><use href="#eye"/></svg><svg class="i" style="left:158px;width:19px;height:19px"><use href="#alarm"/></svg><svg class="i" style="left:184px;top:-8px;width:19px;height:14px"><use href="#al"/></svg>
<svg class="i" style="left:239px;top:-11px;width:20px;height:20px"><use href="#htl"/></svg>
<div class="t w" style="left:267px">HTTP urls</div>
<svg class="i" style="left:398px;width:18px;height:20px"><use href="#user"/></svg><a class="t" style="left:423px">Ted Miller</a>
<svg class="i" style="left:713px;width:20px;height:20px"><use href="#clg"/></svg><div class="t w" style="left:739px">2/24/2025 3:4...</div>
<svg class="i" style="left:917px;width:11px;height:20px"><use href="#q"/></svg></div>

<!-- right panel frame -->
<div class="b" style="left:983px;top:122px;width:908px;height:1px;background:#444"></div>
<div class="b" style="left:983px;top:122px;width:1px;height:928px;background:#333"></div>
<div class="b" style="left:1891px;top:125px;width:1px;height:922px;background:#3a3a3a"></div>
<div class="b" style="left:983px;top:1050px;width:908px;height:1px;background:#3a3a3a"></div>
<div class="b" style="left:983px;top:232px;width:908px;height:1px;background:#3c3c3c"></div>

<!-- toolbar 1 -->
<svg class="i" style="left:996px;top:129px;width:3px;height:27px"><path d="M1.500 0v27" stroke="#ccc" stroke-width="3" stroke-dasharray="3 3.500"/></svg>
<svg class="i" style="left:1016px;top:133px;width:16px;height:20px"><use href="#hdr"/></svg>
<div class="t" style="left:1037px;top:134px;font-size:14.5px">Show message header</div>
<svg class="i" style="left:1193px;top:133px;width:18px;height:18px"><use href="#sv"/></svg>
<div class="t" style="left:1219px;top:133px;font-size:14px">Save</div>
<svg class="i" style="left:1266px;top:133px;width:18px;height:20px"><use href="#del"/></svg>
<div class="t" style="left:1288px;top:133px;font-size:14.5px">Delete</div>
<div class="sep" style="left:1335px;top:126px;width:1px;height:32px;background:#555"></div>
<svg class="i" style="left:1346px;top:133px;width:17px;height:20px"><use href="#prn"/></svg>
<div class="t" style="left:1368px;top:133px;font-size:14.5px">Print</div>
<svg class="i" style="left:1409px;top:133px;width:18px;height:20px"><use href="#srch"/></svg>
<div class="t" style="left:1433px;top:134px;font-size:14.5px">Search</div>
<svg class="i" style="left:1483px;top:141px;width:8px;height:5px"><path d="M0 0h8L4 5z" fill="#ccc"/></svg>
<svg class="i" style="left:1503px;top:133px;width:18px;height:18px"><use href="#ext"/></svg>
<div class="t" style="left:1525px;top:133px;font-size:14.9px">Open external</div>
<svg class="i" style="left:1630px;top:133px;width:18px;height:20px"><use href="#add"/></svg>
<div class="t" style="left:1650px;top:133px;font-size:15.3px">Add to investigation</div>
<div class="sep" style="left:1790px;top:126px;width:1px;height:32px;background:#555"></div>
<svg class="i" style="left:1801px;top:134px;width:18px;height:18px"><use href="#lnk"/></svg>
<svg class="i" style="left:1877px;top:146px;width:9px;height:11px"><path d="M1 1l3.500 3.500L8 1M1 6l3.500 3.500L8 6" fill="none" stroke="#999" stroke-width="1.500"/></svg>

<!-- row 2 -->
<svg class="i" style="left:991px;top:171px;width:17px;height:19px"><use href="#clk"/></svg>
<div class="t" style="left:1013px;top:171px;font-size:14px">Received:</div>
<div class="t" style="left:1083px;top:171px;font-size:14px">2/24/2025 11:37:26 AM</div>
<div class="t" style="left:1259px;top:171px;font-size:14px">From IP:</div>
<div class="t" style="left:1320px;top:171px;font-size:14px">192.168.1.162</div>
<div class="t" style="left:1420px;top:171px;font-size:14px">POP3 protocol</div>
<div class="t" style="left:1533px;top:171px;font-size:14px">Size:</div>
<div class="t" style="left:1572px;top:171px;font-size:14px">16.3 KB</div>
<svg class="i" style="left:1818px;top:172px;width:19px;height:19px"><use href="#alarm"/></svg>
<div class="b" style="left:1827px;top:170px;width:16px;height:16px;border-radius:50%;background:#e33c3c;color:#fff;font-size:12px;line-height:16px;text-align:center">1</div>
<svg class="i" style="left:1862px;top:173px;width:19px;height:14px"><use href="#al"/></svg>

<!-- row 3 -->
<svg class="i" style="left:991px;top:205px;width:17px;height:20px"><use href="#job"/></svg>
<div class="t" style="left:1015px;top:205px;font-size:14.5px;font-weight:bold;color:#c4c4c4;transform:scaleX(.95);transform-origin:left">Search for a new job</div>
<div class="sep" style="left:1161px;top:203px;width:1px;height:25px;background:#444"></div>
<svg class="i" style="left:1168px;top:205px;width:20px;height:20px"><use href="#warn"/></svg>
<div class="t" style="left:1193px;top:205px;font-size:14.5px">Risk level:</div>
<div class="t" style="left:1263px;top:205px;font-size:14.5px;font-weight:bold">87</div>
<div class="t" style="left:1689px;top:205px;font-size:14.5px;font-weight:bold;color:#c4c4c4;transform:scaleX(.97);transform-origin:left">Current incident status:</div>
<svg class="i" style="left:1863px;top:204px;width:12px;height:20px"><use href="#q"/></svg>

<!-- row 4 -->
<div class="t k" style="left:992px;top:245px;transform:scaleX(.95);transform-origin:left">Local user:</div>
<svg class="i" style="left:1080px;top:245px;width:18px;height:20px"><use href="#user"/></svg>
<a class="t" style="left:1105px;top:245px;font-size:14.8px">Ted Miller</a>
<div class="t k" style="left:1181px;top:245px">-</div>
<div class="t k" style="left:1199px;top:245px;transform:scaleX(.95);transform-origin:left">Remote user:</div>
<svg class="i" style="left:1304px;top:246px;width:18px;height:18px"><use href="#mail"/></svg>
<a class="t" style="left:1329px;top:245px;font-size:15px">welcome@linkedin.com</a>

<!-- main fields -->
<svg class="i" style="left:994px;top:285px;width:12px;height:12px"><use href="#cu"/></svg>
<div class="t f" style="left:1016px;top:281px">Main fields</div>
<div class="t k" style="left:1001px;top:312px">From:</div><div class="t f" style="left:1066px;top:312px">LinkedIn &lt;welcome@linkedin.com&gt;</div>
<div class="t k" style="left:1001px;top:340px">To:</div><div class="t f" style="left:1066px;top:340px">Ted Miller &lt;ted.miller78@gmail.com&gt;</div>
<div class="t k" style="left:1001px;top:368px">Subject:</div><div class="t f" style="left:1066px;top:367px">Ted, welcome to LinkedIn!</div>
<svg class="i" style="left:994px;top:402px;width:12px;height:12px"><use href="#cu"/></svg>
<div class="t f" style="left:1016px;top:399px">Additional fields</div>
<div class="t k" style="left:1001px;top:430px">Local IP:</div><div class="t f" style="left:1103px;top:430px;font-size:14px">192.168.1.162</div>
<div class="t k" style="left:1001px;top:458px">Remote IP:</div><div class="t f" style="left:1103px;top:458px;font-size:14px">192.168.0.10</div>
<div class="t k" style="left:1001px;top:485px">POP3 Server:</div><div class="t f" style="left:1103px;top:485px;font-size:14px">192.168.0.10:110</div>
<div class="b" style="left:988px;top:511px;width:903px;height:1px;background:#3c3c3c"></div>
<div class="b" style="left:988px;top:511px;width:1px;height:85px;background:#333"></div>

<!-- toolbar 2 -->
<svg class="i" style="left:998px;top:522px;width:18px;height:18px"><use href="#sv"/></svg>
<svg class="i" style="left:1031px;top:522px;width:18px;height:20px"><use href="#del"/></svg>
<div class="t" style="left:1052px;top:523px;font-size:14.8px">Delete</div>
<div class="sep" style="left:1101px;top:515px;width:1px;height:32px;background:#555"></div>
<svg class="i" style="left:1111px;top:522px;width:18px;height:20px"><use href="#prn"/></svg>
<svg class="i" style="left:1142px;top:522px;width:18px;height:20px"><use href="#srch"/></svg>
<div class="t" style="left:1167px;top:524px;font-size:14.5px">Search</div>
<svg class="i" style="left:1217px;top:530px;width:8px;height:5px"><path d="M0 0h8L4 5z" fill="#ccc"/></svg>
<svg class="i" style="left:1238px;top:522px;width:18px;height:18px" viewBox="0 0 18 18"><rect width="18" height="18" fill="#e3f1fa"/><path d="M0 0h18v4H0zM4 7h9v2l3-3.500L13 2M14 11H5V9l-3 3.500L5 16" fill="#3f8fd4"/></svg>
<svg class="i" style="left:1269px;top:522px;width:18px;height:18px"><use href="#ext"/></svg>
<svg class="i" style="left:1302px;top:522px;width:18px;height:20px"><use href="#add"/></svg>
<div class="t" style="left:1323px;top:523px;font-size:15.3px">Add to investigation</div>
<div class="sep" style="left:1463px;top:515px;width:1px;height:32px;background:#555"></div>
<svg class="i" style="left:1474px;top:522px;width:18px;height:18px"><use href="#lnk"/></svg>
<svg class="i" style="left:1509px;top:522px;width:18px;height:18px" viewBox="0 0 18 18"><circle cx="9" cy="9" r="9" fill="#3b87d8"/><rect x="7.700" y="7.500" width="2.800" height="7" fill="#fff"/><rect x="7.700" y="3.500" width="2.800" height="2.600" fill="#fff"/></svg>
<div class="t" style="left:1533px;top:524px;font-size:15.3px">Detailed Information</div>

<!-- highlight row -->
<div class="b" style="left:993px;top:554px;width:101px;height:38px;background:#3a3a3a;border:1px solid #4fc1f5;box-sizing:border-box"></div>
<svg class="i" style="left:1000px;top:559px;width:22px;height:28px" viewBox="0 0 22 28"><path d="M1 1h13l7 7v19H1z" fill="#f4f6f8" stroke="#b5c3ce" stroke-width=".8"/><rect x="3" y="13" width="17" height="11" fill="#ffe800"/><path d="M5 16h13M5 20h9" stroke="#222" stroke-width="1.600"/></svg>
<div class="t" style="left:1030px;top:565px;font-size:15.4px">Highlight</div>
<div class="t" style="left:1103px;top:564px;font-size:15px">Found:</div>
<div class="b" style="left:1152px;top:554px;width:63px;height:38px;border:1px solid #3e3e3e;border-radius:4px;box-sizing:border-box"></div>
<div class="t" style="left:1193px;top:564px;font-size:15px">1</div>
<div class="t" style="left:1219px;top:564px;font-size:15px">/ 2</div>
<svg class="i" style="left:1243px;top:566px;width:16px;height:12px"><path d="M0 6l7-6v12z" fill="#4a9fdc"/><rect x="7" y="3" width="4" height="6" fill="#4a9fdc"/><rect x="12" y="3" width="3" height="6" fill="#4a9fdc"/></svg>
<svg class="i" style="left:1273px;top:566px;width:16px;height:12px"><path d="M16 6 9 0v12z" fill="#4a9fdc"/><rect x="5" y="3" width="4" height="6" fill="#4a9fdc"/><rect x="1" y="3" width="3" height="6" fill="#4a9fdc"/></svg>

<!-- email view -->
<div class="b" style="left:989px;top:595px;width:896px;height:414px;background:#f3f3f3"></div>
<div class="b" style="left:1138px;top:606px;width:578px;height:382px;background:#fff;border:1px solid #dcdcdc;border-bottom:0;box-sizing:border-box"></div>
<div class="t" style="left:1158px;top:630px;height:24px;line-height:24px;font-size:18px;font-weight:bold;color:#333">Welcome to LinkedIn!</div>
<div class="t" style="left:1598px;top:625px;height:28px;line-height:28px;font-size:21px;font-weight:bold;color:#222;letter-spacing:-.3px">Linked</div>
<div class="b" style="left:1665px;top:627px;width:23px;height:24px;background:#1e8fc2;border-radius:2px;color:#fff;font-weight:bold;font-size:21px;line-height:28px;text-align:center">in</div>
<div class="b" style="left:1691px;top:645px;width:5px;height:5px;border-radius:50%;background:#333"></div>
<div class="t" style="left:1158px;top:664px;font-size:14.27px;color:#333">Make sure recruiters and colleagues see all you have to offer.</div>
<div class="b" style="left:1158px;top:697px;width:538px;height:240px;background:#dcedf4"></div>
<div class="t" style="left:1169px;top:708px;font-size:15.5px;color:#000">Ted Miller</div>
<div class="t" style="left:1169px;top:737px;height:24px;line-height:24px;font-size:20px;color:#555">Computer Software Professional</div>
<div class="t" style="left:1169px;top:765px;height:24px;line-height:24px;font-size:19.9px;color:#555">San Francisco Bay Area | Computer</div>
<div class="t" style="left:1169px;top:788px;height:24px;line-height:24px;font-size:20px;color:#555">Software</div>
<svg class="i" style="left:1602px;top:709px;width:79px;height:78px" viewBox="0 0 79 78"><rect width="79" height="78" fill="#fff" stroke="#eee"/><rect x="29" y="17" width="23" height="32" rx="10" fill="#e4e4e4"/><path d="M7 74c1-10 3-20 10-23l14-5 8 11 9-11 13 5c7 3 9 13 10 23z" fill="#dcdcdc"/></svg>
<a class="t se" style="left:1613px;top:791px;font-size:13px;color:#069">Add Photo</a>
<div class="b" style="left:1169px;top:820px;width:516px;height:106px;background:#fff"></div>
<div class="t se" style="left:1179px;top:831px;font-size:18px;color:#555">Current</div>
<a class="t se" style="left:1296px;top:833px;font-size:12.5px;color:#069">Add Company</a><div class="t se" style="left:1373px;top:833px;font-size:13px;color:#069">»</div>
<div class="t se" style="left:1179px;top:863px;font-size:18px;color:#555">Past</div>
<div class="t se" style="left:1296px;top:863px;font-size:18px;color:#000">IT</div>
<div class="b" style="left:1179px;top:894px;width:79px;height:22px;background:#0078d7"></div>
<div class="t se" style="left:1179px;top:895px;font-size:18.5px;color:#fff">Education</div>
<a class="t se" style="left:1296px;top:896px;font-size:12.5px;color:#069">Add</a>
<div class="b" style="left:1320px;top:899px;width:48px;height:14px;background:#92038f"></div>
<div class="t se" style="left:1320px;top:896px;font-size:12.5px;color:#1c6aa0;text-decoration:underline">Education</div><div class="t se" style="left:1371px;top:896px;font-size:13px;color:#069">»</div>
<div class="b" style="left:1159px;top:953px;width:134px;height:29px;background:#cfe5f1;border:1px solid #a0cde3;box-sizing:border-box"></div>
<div class="t" style="left:1176px;top:958px;font-size:12px;color:#1f6f9f">Finish Your Profile</div>
<!-- scrollbars -->
<div class="b" style="left:1864px;top:595px;width:20px;height:393px;background:#f3f3f3"></div>
<div class="b" style="left:1865px;top:629px;width:19px;height:248px;background:#c8c8c8"></div>
<svg class="i" style="left:1867px;top:609px;width:15px;height:13px"><path d="M1 12 7.500 2 14 12" fill="none" stroke="#555" stroke-width="3"/></svg>
<svg class="i" style="left:1867px;top:960px;width:15px;height:13px"><path d="M1 1l6.500 10L14 1" fill="none" stroke="#555" stroke-width="3"/></svg>
<div class="b" style="left:989px;top:988px;width:896px;height:20px;background:#f3f3f3"></div>
<div class="b" style="left:1023px;top:989px;width:807px;height:19px;background:#cbcbcb"></div>
<svg class="i" style="left:1004px;top:990px;width:14px;height:16px"><path d="M12 1 2 8l10 7" fill="none" stroke="#555" stroke-width="3"/></svg>
<svg class="i" style="left:1836px;top:990px;width:14px;height:16px"><path d="M2 1l10 7-10 7" fill="none" stroke="#555" stroke-width="3"/></svg>

<!-- body tab -->
<div class="b" style="left:988px;top:1009px;width:105px;height:38px;border:1px solid #3a3a3a;border-top:0;border-radius:0 0 5px 5px;box-sizing:border-box"></div>
<svg class="i" style="left:1007px;top:1019px;width:19px;height:19px"><use href="#mailx"/></svg>
<div class="t" style="left:1033px;top:1018px;height:22px;line-height:22px;font-size:18px;color:#bdbdbd">Body</div>
</div>
</body></html>
